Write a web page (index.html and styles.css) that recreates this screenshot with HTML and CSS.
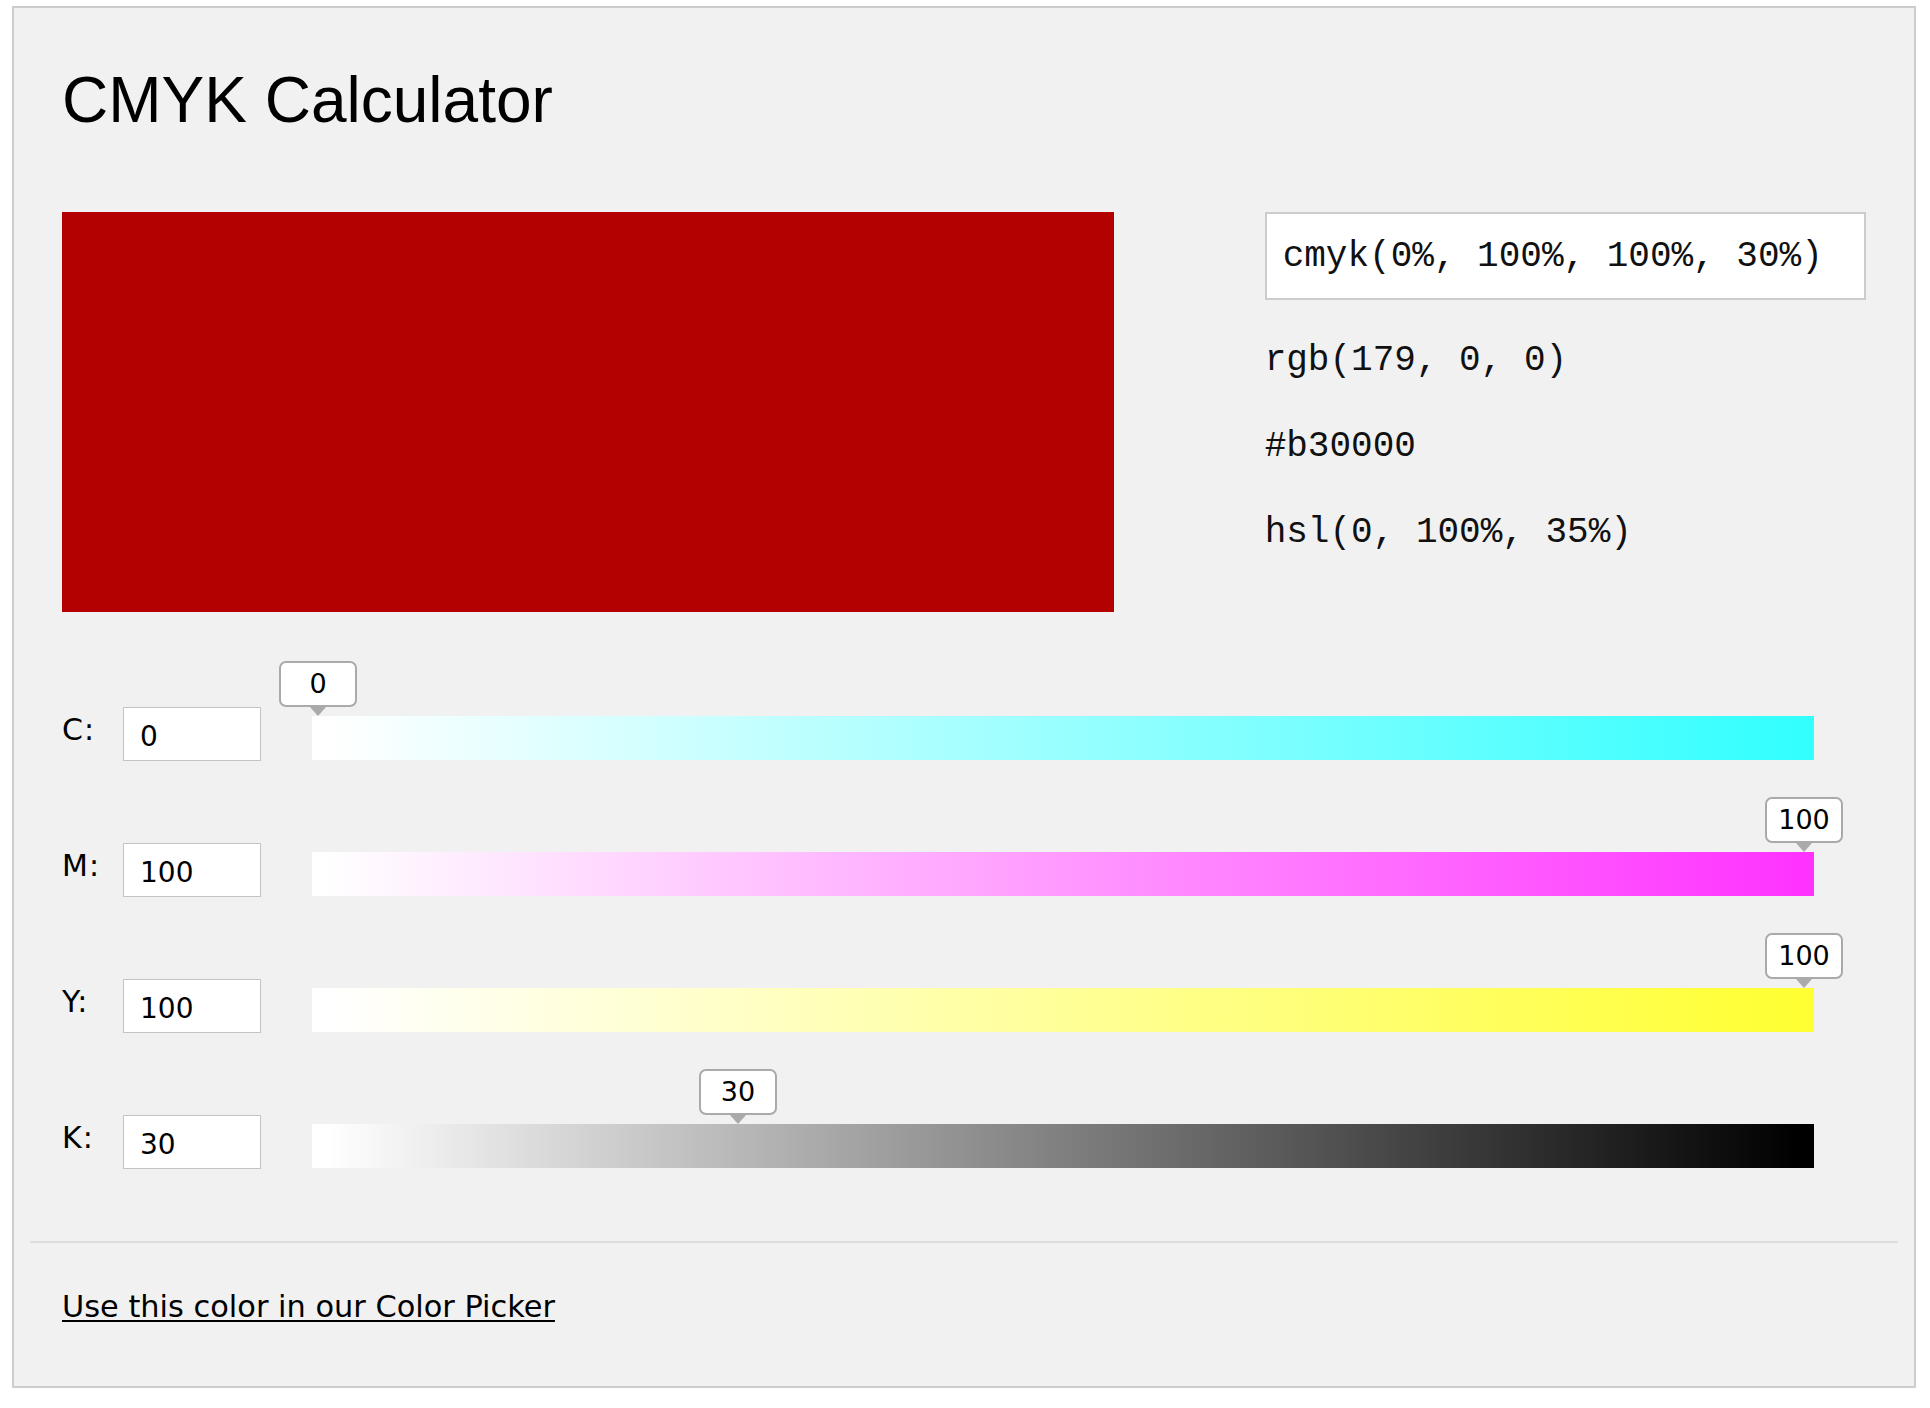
FILE: index.html
```
<!DOCTYPE html>
<html lang="en">
<head>
<meta charset="utf-8">
<title>CMYK Calculator</title>
<link rel="stylesheet" href="styles.css">
</head>
<body>
<div class="calc">
  <h1 class="title">CMYK Calculator</h1>
  <div class="top">
    <div class="swatch"></div>
    <div class="values">
      <div class="code-box">cmyk(0%, 100%, 100%, 30%)</div>
      <p class="code">rgb(179, 0, 0)</p>
      <p class="code">#b30000</p>
      <p class="code">hsl(0, 100%, 35%)</p>
    </div>
  </div>
  <div class="sliders">
    <div class="row">
      <span class="label">C:</span>
      <input class="num" type="text" value="0">
      <div class="bar bar-c">
        <span class="tip" style="left: -33px">0</span>
      </div>
    </div>
    <div class="row">
      <span class="label">M:</span>
      <input class="num" type="text" value="100">
      <div class="bar bar-m">
        <span class="tip" style="left: 1453px">100</span>
      </div>
    </div>
    <div class="row">
      <span class="label">Y:</span>
      <input class="num" type="text" value="100">
      <div class="bar bar-y">
        <span class="tip" style="left: 1453px">100</span>
      </div>
    </div>
    <div class="row">
      <span class="label">K:</span>
      <input class="num" type="text" value="30">
      <div class="bar bar-k">
        <span class="tip" style="left: 387px">30</span>
      </div>
    </div>
  </div>
  <hr class="sep">
  <p class="link-line"><a class="link" href="#">Use this color in our Color Picker</a></p>
</div>
</body>
</html>
```
FILE: styles.css
```
html, body {
  margin: 0;
  padding: 0;
  background: #ffffff;
}

.calc {
  box-sizing: border-box;
  width: 1904px;
  margin: 6px 0 0 12px;
  border: 2px solid #cccccc;
  background: #f1f1f1;
  padding: 0 48px 62px 48px;
  font-family: "DejaVu Sans", Verdana, sans-serif;
  color: #000;
}

.title {
  margin: 60px 0 0 0;
  font-family: "Liberation Sans", Arial, sans-serif;
  font-size: 64px;
  line-height: 64px;
  font-weight: normal;
}

.top {
  display: grid;
  grid-template-columns: 7fr 1fr 4fr;
  margin-top: 80px;
}

.swatch {
  grid-column: 1;
  height: 400px;
  background: #b30000;
}

.values {
  grid-column: 3;
  display: flex;
  flex-direction: column;
}

.code-box {
  box-sizing: border-box;
  height: 88px;
  display: flex;
  align-items: center;
  padding: 0 16px;
  background: #ffffff;
  border: 2px solid #cccccc;
  font-family: "Liberation Mono", "Courier New", monospace;
  font-size: 36px;
  margin-bottom: 40px;
  color: #111;
}

.code {
  margin: 0;
  font-family: "Liberation Mono", "Courier New", monospace;
  font-size: 36px;
  color: #111;
}

.code + .code {
  margin-top: 45px;
}

.sliders {
  margin-top: 95px;
  display: flex;
  flex-direction: column;
  gap: 82px;
}

.row {
  display: flex;
  align-items: flex-start;
  height: 54px;
}

.label {
  width: 61px;
  margin-top: 8px;
  font-size: 30px;
  line-height: 30px;
  letter-spacing: 1px;
}

.num {
  box-sizing: border-box;
  width: 138px;
  height: 54px;
  margin: 0;
  padding: 4px 16px 0 16px;
  border: 1px solid #c4c4c4;
  background: #ffffff;
  font-family: "DejaVu Sans", Verdana, sans-serif;
  font-size: 28px;
  color: #000;
  outline: none;
}

.bar {
  position: relative;
  width: 1502px;
  height: 44px;
  margin: 9px 0 0 51px;
}

.bar-c { background: linear-gradient(to right, #ffffff 1%, #33ffff 99%); }
.bar-m { background: linear-gradient(to right, #ffffff 1%, #ff33ff 99%); }
.bar-y { background: linear-gradient(to right, #ffffff 1%, #ffff33 99%); }
.bar-k { background: linear-gradient(to right, #ffffff 1%, #000000 99%); }

.tip {
  position: absolute;
  top: -55px;
  box-sizing: border-box;
  width: 78px;
  height: 46px;
  border: 2px solid #aaaaaa;
  border-radius: 7px;
  background: #ffffff;
  font-size: 27px;
  line-height: 42px;
  text-align: center;
}

.tip::after {
  content: "";
  position: absolute;
  left: 29px;
  bottom: -11px;
  width: 0;
  height: 0;
  border-left: 8px solid transparent;
  border-right: 8px solid transparent;
  border-top: 9px solid #aaaaaa;
}

.sep {
  margin: 72px -32px 0 -32px;
  height: 0;
  border: 0;
  border-top: 2px solid #dddddd;
}

.link-line {
  margin: 46px 0 0 0;
  font-size: 30.4px;
}

.link {
  color: #000;
  text-decoration: underline;
  text-decoration-thickness: 2px;
  text-underline-offset: 3px;
}
```
